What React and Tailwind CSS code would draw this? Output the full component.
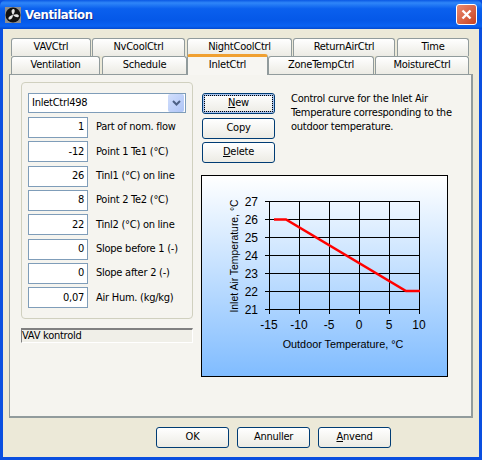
import React from "react";

function Tab({ label, className = "" }) {
  return (
    <div className={`flex items-center justify-center h-[18px] border border-b-0 border-[#919b9c] rounded-t-[3px] bg-gradient-to-b from-white to-[#ecebe4] text-[11px] text-black ${className}`}>
      {label}
    </div>
  );
}

function Btn({ className = "", children }) {
  return (
    <div className={`flex items-center justify-center w-[73px] h-[21px] rounded-[3px] border border-[#003c74] bg-gradient-to-b from-white to-[#ecebe4] text-[11px] text-black ${className}`}>
      {children}
    </div>
  );
}

function Field({ value, label }) {
  return (
    <div className="flex items-center h-[21px]">
      <div className="w-[60px] shrink-0 h-full border border-[#7f9db9] bg-white flex items-center justify-end pr-[3px] text-[11px] text-black">{value}</div>
      <div className="ml-[8px] text-[11px] text-black whitespace-nowrap">{label}</div>
    </div>
  );
}

function Chart() {
  const xs = [67, 97, 127, 157, 187, 217];
  const xl = ["-15", "-10", "-5", "0", "5", "10"];
  const ys = [25, 43, 61, 79, 97, 115, 133];
  const yl = ["27", "26", "25", "24", "23", "22", "21"];
  return (
    <svg width="245" height="200" viewBox="0 0 245 200" className="font-['Liberation_Sans',Arial,sans-serif] [font-stretch:normal] tracking-normal">
      <g stroke="#000" strokeWidth="1" shapeRendering="crispEdges">
        {xs.map((x) => <line key={x} x1={x + 0.5} y1="25" x2={x + 0.5} y2="138" />)}
        {ys.map((y) => <line key={y} x1="63" y1={y + 0.5} x2="218" y2={y + 0.5} />)}
      </g>
      <polyline points="72,43.5 84,43.5 204,115 218,115" fill="none" stroke="#ff0000" strokeWidth="2.6" />
      <g fontSize="12" fill="#000" textAnchor="end">
        {ys.map((y, i) => <text key={y} x="56" y={y + 5}>{yl[i]}</text>)}
      </g>
      <g fontSize="12" fill="#000" textAnchor="middle">
        {xs.map((x, i) => <text key={x} x={x} y="153">{xl[i]}</text>)}
      </g>
      <text x="141" y="172" fontSize="10.8" fill="#000" textAnchor="middle">Outdoor Temperature, °C</text>
      <text transform="translate(36 80) rotate(-90)" fontSize="10.4" fill="#000" textAnchor="middle">Inlet Air Temperature, °C</text>
    </svg>
  );
}

export default function App() {
  return (
    <div className="w-[482px] h-[460px] flex flex-col bg-[#0a4fe0] overflow-hidden font-['DejaVu_Sans',Tahoma,sans-serif] font-stretch-condensed tracking-[-0.25px]">
      <div className="h-[29px] flex items-center bg-[linear-gradient(to_bottom,#0a58e4_0%,#2f86f8_10%,#0a60ee_30%,#0558e8_70%,#0a62f2_90%,#0349d0_100%)] pl-[5px] pr-[5px] rounded-t-[6px]">
        <svg width="16" height="16" viewBox="0 0 16 16" className="shrink-0">
          <rect width="16" height="16" fill="#8f8f8f" />
          <circle cx="8" cy="8" r="7.5" fill="#111" />
          <path d="M8 8C6 5 6 2.5 8.5 2c2 .5 1.5 3.5-.5 6zM8 8c3-1.5 5.5-1 6 1-.7 2-3.5 1.5-6-1zM8 8c0 3-2 5-4 4.5C2.500 11 4.500 8.500 8 8z" fill="#e4e4e4" />
        </svg>
        <div className="ml-[4px] text-[13px] font-bold text-white tracking-[-0.4px] [text-shadow:1px_1px_0_#0a2a90]">Ventilation</div>
        <div className="ml-auto w-[21px] h-[21px] rounded-[3px] border border-white bg-gradient-to-br from-[#e98a70] to-[#c9401c] flex items-center justify-center">
          <svg width="11" height="11" viewBox="0 0 11 11"><path d="M1.500 1.500l8 8M9.500 1.500l-8 8" stroke="#fff" strokeWidth="2.400" /></svg>
        </div>
      </div>

      <div className="flex-1 mx-[3px] mb-[3px] bg-[#ece9d8] flex flex-col">
        <div className="pt-[9px] pl-[8px] flex">
          <Tab label="VAVCtrl" className="w-[80px]" />
          <Tab label="NvCoolCtrl" className="w-[93px] ml-[1px]" />
          <Tab label="NightCoolCtrl" className="w-[105px] ml-[2px]" />
          <Tab label="ReturnAirCtrl" className="w-[102px] ml-[1px]" />
          <Tab label="Time" className="w-[72px] ml-[2px]" />
        </div>
        <div className="pl-[8px] flex h-[18px]">
          <Tab label="Ventilation" className="w-[89px]" />
          <Tab label="Schedule" className="w-[85px] ml-[2px]" />
          <div className="relative z-10 w-[81px] h-[21px] -mt-[2px] rounded-t-[3px] border-x border-[#919b9c] border-t-[3px] border-t-[#f0a030] bg-[#f7f6f2] flex items-start justify-center text-[11px] text-black">InletCtrl</div>
          <Tab label="ZoneTempCtrl" className="w-[106px]" />
          <Tab label="MoistureCtrl" className="w-[94px] ml-[1px]" />
        </div>

        <div className="mx-[6px] h-[344px] border border-[#919b9c] border-r-2 border-b-2 bg-[#f5f4ef] flex pl-[11px] pt-[7px]">
          <div className="w-[172px] flex flex-col">
            <div className="h-[237px] border border-[#d0d0bf] rounded-[4px] pl-[6px] pr-[6px] pt-[10px]">
              <div className="h-[20px] border border-[#7f9db9] bg-white flex items-center pl-[3px] pr-px text-[11px] text-black">
                InletCtrl498
                <div className="ml-auto w-[16px] h-[18px] rounded-[2px] bg-gradient-to-br from-[#d2dffc] to-[#aec4f6] flex items-center justify-center">
                  <svg width="9" height="7" viewBox="0 0 9 7"><path d="M1 1l3.500 3.500L8 1" fill="none" stroke="#4d6185" strokeWidth="2" /></svg>
                </div>
              </div>
              <div className="mt-[4px] flex flex-col gap-[3.33px]">
                <Field value="1" label="Part of nom. flow" />
                <Field value="-12" label="Point 1 Te1 (°C)" />
                <Field value="26" label="Tinl1 (°C) on line" />
                <Field value="8" label="Point 2 Te2 (°C)" />
                <Field value="22" label="Tinl2 (°C) on line" />
                <Field value="0" label="Slope before 1 (-)" />
                <Field value="0" label="Slope after 2 (-)" />
                <Field value="0,07" label="Air Hum. (kg/kg)" />
              </div>
            </div>
            <div className="mt-[9px] h-[15px] border border-t-2 border-t-[#808080] border-l-[#808080] border-r-white border-b-white bg-[#f0efe8] flex items-center text-[11px] text-black">VAV kontrold</div>
          </div>

          <div className="ml-[8px] flex-1 flex flex-col">
            <div className="flex">
              <div className="flex flex-col pl-px pt-[11px]">
                <Btn className="outline-1 outline-dotted outline-black -outline-offset-3 shadow-[inset_0_0_0_2px_#a9c4ee]"><span><span className="underline">N</span>ew</span></Btn>
                <Btn className="mt-[4px]">Copy</Btn>
                <Btn className="mt-[3px]"><span><span className="underline">D</span>elete</span></Btn>
              </div>
              <div className="ml-[16px] mt-[10px] w-[170px] text-[11px] leading-[14px] text-black">
                Control curve for the Inlet Air Temperature corresponding to the outdoor temperature.
              </div>
            </div>
            <div className="mt-[12px] w-[247px] h-[202px] border border-black bg-gradient-to-b from-white to-[#80bcff]">
              <Chart />
            </div>
          </div>
        </div>

        <div className="flex-1 flex pl-[153px] pt-[9px]">
          <Btn>OK</Btn>
          <Btn className="ml-[8px]">Annuller</Btn>
          <Btn className="ml-[8px]"><span><span className="underline">A</span>nvend</span></Btn>
        </div>
      </div>
    </div>
  );
}
